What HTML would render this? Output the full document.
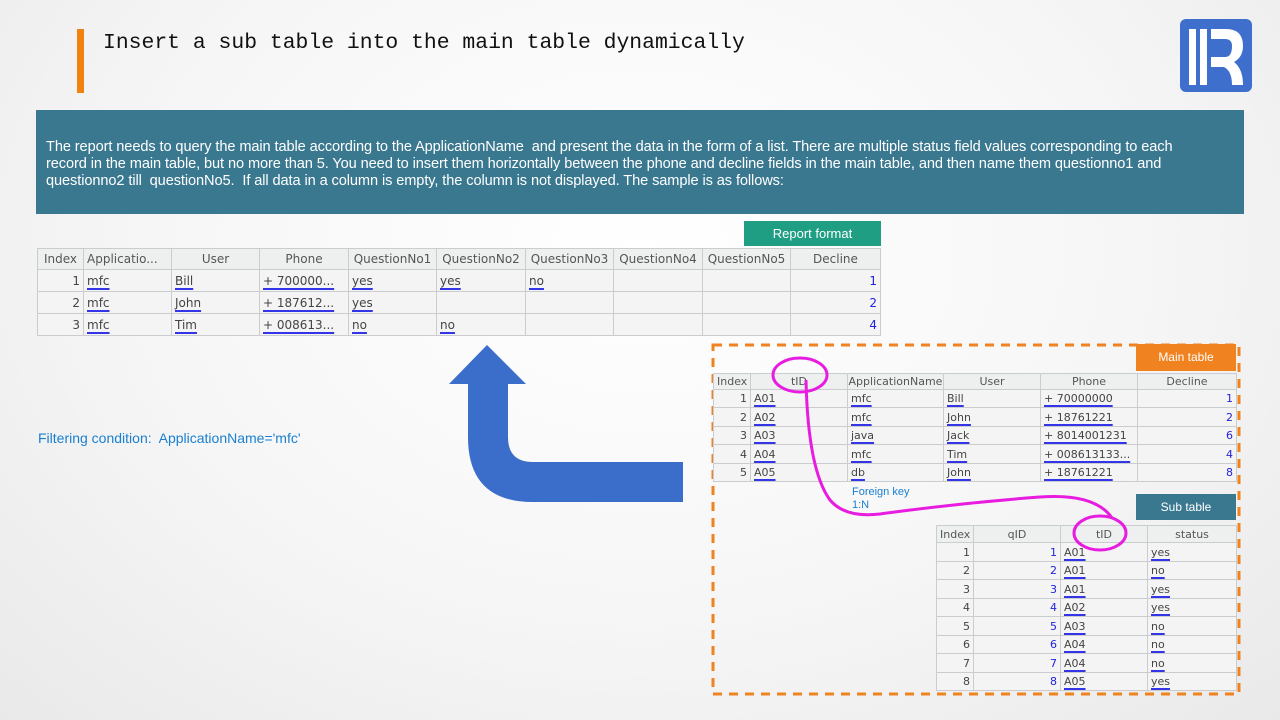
<!DOCTYPE html>
<html><head><meta charset="utf-8"><style>
body{margin:0;width:1280px;height:720px;overflow:hidden;position:relative;background:radial-gradient(ellipse at 50% 35%,#ffffff 0%,#f6f6f6 55%,#e9e9e9 100%);font-family:"DejaVu Sans","Liberation Sans",sans-serif;}
.abs{position:absolute}
table{border-collapse:collapse;table-layout:fixed;position:absolute;background:#f3f4f3;font-size:12px;color:#444}
td{border:1px solid #c9cdd0;padding:0 3px;white-space:nowrap;overflow:hidden;line-height:1}
tr.h td{text-align:center;background:#eef0f0;color:#555}
td.r{text-align:right}
.u{text-decoration:underline;text-decoration-color:#3535e8;text-decoration-thickness:2px;text-underline-offset:3px;color:#444}
.n{color:#2222dd}
.t2{font-size:11px}
</style></head><body>
<div class="abs" style="left:77px;top:29px;width:7px;height:64px;background:#f0820f"></div>
<div class="abs" style="left:103px;top:31px;font-family:'Liberation Mono',monospace;font-size:21.4px;color:#111">Insert a sub table into the main table dynamically</div>
<svg class="abs" style="left:1180px;top:19px" width="72" height="73" viewBox="0 0 72 73"><rect width="72" height="73" rx="6" fill="#3f6fcd"/><rect x="9" y="10" width="7" height="56" fill="#fff"/><rect x="20" y="10" width="7" height="56" fill="#fff"/><path d="M31 10 H46 Q63 10 63 27 Q63 38 54 43 Q63 50 63 66 H52 Q52 52 44 48 H31 V38 H45 Q52 38 52 27 Q52 20 45 20 H31 Z" fill="#fff"/></svg>
<div class="abs" style="left:36px;top:110px;width:1208px;height:104px;background:#3a7890"></div>
<div class="abs" style="left:46px;top:139px;width:1190px;white-space:nowrap;font-family:'Liberation Sans',sans-serif;font-size:14.6px;line-height:17px;color:#fff;letter-spacing:-0.1px">The report needs to query the main table according to the ApplicationName&nbsp; and present the data in the form of a list. There are multiple status field values corresponding to each<br>record in the main table, but no more than 5. You need to insert them horizontally between the phone and decline fields in the main table, and then name them questionno1 and<br>questionno2 till&nbsp; questionNo5.&nbsp; If all data in a column is empty, the column is not displayed. The sample is as follows:</div>
<div class="abs" style="left:744px;top:221px;width:137px;height:25px;background:#1f9e84;color:#fff;font-family:'Liberation Sans',sans-serif;font-size:13px;line-height:25px;text-align:center">Report format</div>
<table style="left:37px;top:248px;width:843px">
<colgroup><col style="width:46px"><col style="width:88px"><col style="width:88px"><col style="width:89px"><col style="width:88px"><col style="width:89px"><col style="width:88px"><col style="width:89px"><col style="width:88px"><col style="width:90px"></colgroup>
<tr class="h" style="height:21px"><td>Index</td><td style="text-align:left">Applicatio...</td><td>User</td><td>Phone</td><td>QuestionNo1</td><td>QuestionNo2</td><td>QuestionNo3</td><td>QuestionNo4</td><td>QuestionNo5</td><td>Decline</td></tr>
<tr style="height:22px"><td class="r">1</td><td><span class="u">mfc</span></td><td><span class="u">Bill</span></td><td><span class="u">+ 700000...</span></td><td><span class="u">yes</span></td><td><span class="u">yes</span></td><td><span class="u">no</span></td><td></td><td></td><td class="r n">1</td></tr>
<tr style="height:22px"><td class="r">2</td><td><span class="u">mfc</span></td><td><span class="u">John</span></td><td><span class="u">+ 187612...</span></td><td><span class="u">yes</span></td><td></td><td></td><td></td><td></td><td class="r n">2</td></tr>
<tr style="height:22px"><td class="r">3</td><td><span class="u">mfc</span></td><td><span class="u">Tim</span></td><td><span class="u">+ 008613...</span></td><td><span class="u">no</span></td><td><span class="u">no</span></td><td></td><td></td><td></td><td class="r n">4</td></tr>
</table>
<div class="abs" style="left:38px;top:430px;font-family:'Liberation Sans',sans-serif;font-size:14px;color:#1a7fd0">Filtering condition:&nbsp; ApplicationName='mfc'</div>
<svg class="abs" style="left:0;top:0" width="1280" height="720">
<path d="M487 345 L526 384 L508 384 L508 437 Q508 462 533 462 L683 462 L683 502 L533 502 Q468 502 468 437 L468 384 L449 384 Z" fill="#3b6dcb"/>
<rect x="713" y="345" width="526" height="349" fill="none" stroke="#f08220" stroke-width="3" stroke-dasharray="9,7"/>
</svg>
<div class="abs" style="left:1136px;top:344px;width:100px;height:27px;background:#f08220;color:#fff;font-family:'Liberation Sans',sans-serif;font-size:12px;line-height:27px;text-align:center">Main table</div>
<div class="abs" style="left:1136px;top:494px;width:100px;height:26px;background:#3a7890;color:#fff;font-family:'Liberation Sans',sans-serif;font-size:12px;line-height:26px;text-align:center">Sub table</div>
<table class="t2" style="left:713px;top:373px;width:523px">
<colgroup><col style="width:37px"><col style="width:97px"><col style="width:96px"><col style="width:97px"><col style="width:97px"><col style="width:99px"></colgroup>
<tr class="h" style="height:16px"><td>Index</td><td>tID</td><td style="padding:0">ApplicationName</td><td>User</td><td>Phone</td><td>Decline</td></tr>
<tr style="height:18px"><td class="r">1</td><td><span class="u">A01</span></td><td><span class="u">mfc</span></td><td><span class="u">Bill</span></td><td><span class="u">+ 70000000</span></td><td class="r n">1</td></tr>
<tr style="height:19px"><td class="r">2</td><td><span class="u">A02</span></td><td><span class="u">mfc</span></td><td><span class="u">John</span></td><td><span class="u">+ 18761221</span></td><td class="r n">2</td></tr>
<tr style="height:18px"><td class="r">3</td><td><span class="u">A03</span></td><td><span class="u">java</span></td><td><span class="u">Jack</span></td><td><span class="u">+ 8014001231</span></td><td class="r n">6</td></tr>
<tr style="height:19px"><td class="r">4</td><td><span class="u">A04</span></td><td><span class="u">mfc</span></td><td><span class="u">Tim</span></td><td><span class="u">+ 008613133...</span></td><td class="r n">4</td></tr>
<tr style="height:18px"><td class="r">5</td><td><span class="u">A05</span></td><td><span class="u">db</span></td><td><span class="u">John</span></td><td><span class="u">+ 18761221</span></td><td class="r n">8</td></tr>
</table>
<div class="abs" style="left:852px;top:486px;font-family:'Liberation Sans',sans-serif;font-size:11px;line-height:13px;color:#1a7fd0">Foreign key<br>1:N</div>
<table class="t2" style="left:936px;top:525px;width:300px">
<colgroup><col style="width:37px"><col style="width:87px"><col style="width:87px"><col style="width:89px"></colgroup>
<tr class="h" style="height:17px"><td>Index</td><td>qID</td><td>tID</td><td>status</td></tr>
<tr style="height:19px"><td class="r">1</td><td class="r n">1</td><td><span class="u">A01</span></td><td><span class="u">yes</span></td></tr>
<tr style="height:18px"><td class="r">2</td><td class="r n">2</td><td><span class="u">A01</span></td><td><span class="u">no</span></td></tr>
<tr style="height:19px"><td class="r">3</td><td class="r n">3</td><td><span class="u">A01</span></td><td><span class="u">yes</span></td></tr>
<tr style="height:18px"><td class="r">4</td><td class="r n">4</td><td><span class="u">A02</span></td><td><span class="u">yes</span></td></tr>
<tr style="height:19px"><td class="r">5</td><td class="r n">5</td><td><span class="u">A03</span></td><td><span class="u">no</span></td></tr>
<tr style="height:18px"><td class="r">6</td><td class="r n">6</td><td><span class="u">A04</span></td><td><span class="u">no</span></td></tr>
<tr style="height:19px"><td class="r">7</td><td class="r n">7</td><td><span class="u">A04</span></td><td><span class="u">no</span></td></tr>
<tr style="height:18px"><td class="r">8</td><td class="r n">8</td><td><span class="u">A05</span></td><td><span class="u">yes</span></td></tr>
</table>
<svg class="abs" style="left:0;top:0" width="1280" height="720" fill="none" stroke="#e81ce0" stroke-width="3">
<ellipse cx="800" cy="375" rx="27" ry="17"/>
<path d="M806 380 Q808 470 830 500 Q845 518 880 514 Q960 503 1040 497 Q1095 493 1112 518"/>
<ellipse cx="1100" cy="533" rx="26" ry="17"/>
</svg>
</body></html>
